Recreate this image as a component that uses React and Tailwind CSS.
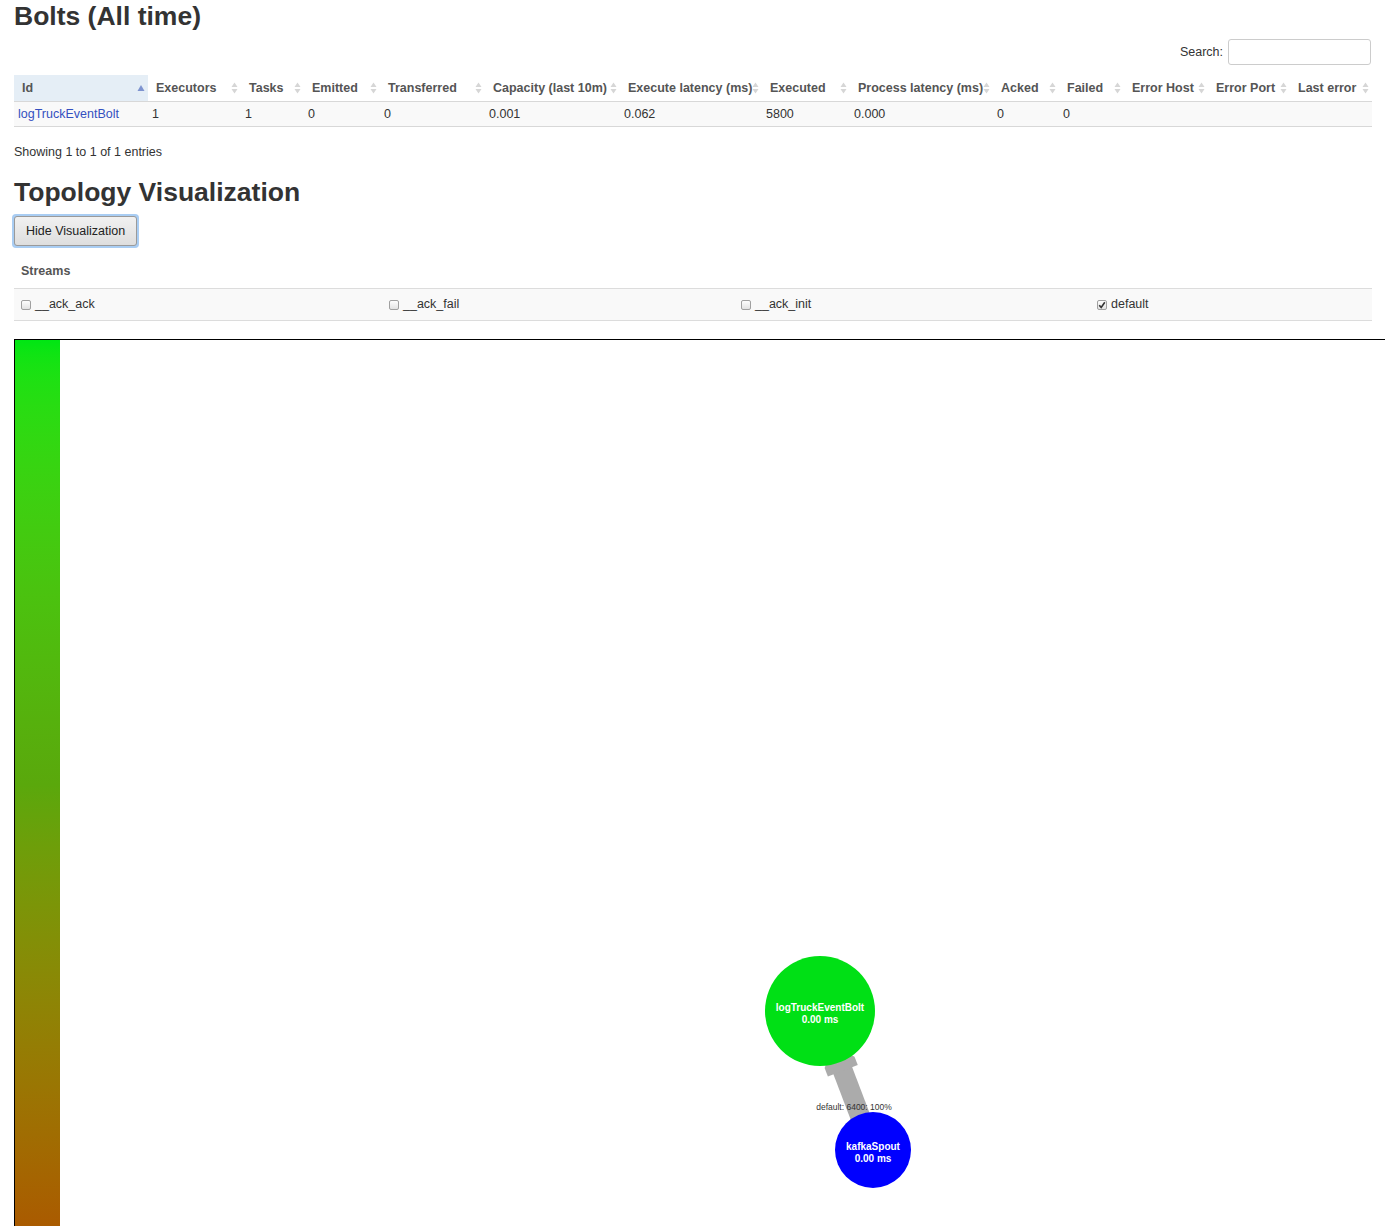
const COLS = [
  { label: "Id", w: 134, sort: "asc" },
  { label: "Executors", w: 93 },
  { label: "Tasks", w: 63 },
  { label: "Emitted", w: 76 },
  { label: "Transferred", w: 105 },
  { label: "Capacity (last 10m)", w: 135 },
  { label: "Execute latency (ms)", w: 142 },
  { label: "Executed", w: 88 },
  { label: "Process latency (ms)", w: 143 },
  { label: "Acked", w: 66 },
  { label: "Failed", w: 65 },
  { label: "Error Host", w: 84 },
  { label: "Error Port", w: 82 },
  { label: "Last error", w: 82 },
];

const ROW = ["logTruckEventBolt", "1", "1", "0", "0", "0.001", "0.062", "5800", "0.000", "0", "0", "", "", ""];

const STREAMS = [
  { name: "__ack_ack", w: 368 },
  { name: "__ack_fail", w: 352 },
  { name: "__ack_init", w: 356 },
  { name: "default", w: 282, checked: true },
];

function SortIcon({ dir }) {
  if (dir === "asc") {
    return (
      <svg width="8" height="8" viewBox="0 0 8 8">
        <path d="M4 1 L7.5 7 L0.5 7 Z" fill="#7e93cf" />
      </svg>
    );
  }
  return (
    <svg width="7" height="12" viewBox="0 0 7 12">
      <path d="M3.5 0.5 L6.5 5 L0.5 5 Z" fill="#d6d6d6" />
      <path d="M3.5 11.5 L6.5 7 L0.5 7 Z" fill="#d6d6d6" />
    </svg>
  );
}

function Check({ checked }) {
  return (
    <span className="inline-flex w-[10px] h-[10px] items-center justify-center rounded-[2px] border border-[#a0a0a0] bg-gradient-to-b from-[#fdfdfd] to-[#e2e2e2]">
      {checked && (
        <svg width="8" height="8" viewBox="0 0 8 8">
          <path d="M1.2 4.2 L3.2 6.4 L6.8 1.2" stroke="#333" strokeWidth="1.6" fill="none" />
        </svg>
      )}
    </span>
  );
}

function Graph() {
  // node centres inside the canvas (canvas origin = page x 60, y 340)
  const g = { x: 760, y: 671, r: 55 };
  const b = { x: 813, y: 810, r: 38 };
  const dx = b.x - g.x, dy = b.y - g.y;
  const len = Math.hypot(dx, dy);
  const ux = dx / len, uy = dy / len;
  const px = -uy, py = ux;
  const at = (d, o) => `${g.x + ux * d + px * o},${g.y + uy * d + py * o}`;
  const shaft = [at(62, -10), at(62, 10), at(len - 20, 10), at(len - 20, -10)].join(" ");
  const head = [at(48, -10), at(55, -16), at(64, -16), at(64, 16), at(55, 16), at(48, 10)].join(" ");
  return (
    <svg width="1400" height="886" className="block">
      <polygon points={shaft} fill="#ababab" />
      <polygon points={head} fill="#ababab" />
      <text x="794" y="770" fontSize="8.5" fill="#333" textAnchor="middle" fontFamily="Liberation Sans, Arial, sans-serif">
        default: 6400: 100%
      </text>
      <circle cx={g.x} cy={g.y} r={g.r} fill="#00e015" />
      <circle cx={b.x} cy={b.y} r={b.r} fill="#0000ff" />
      <g fontFamily="Liberation Sans, Arial, sans-serif" fontSize="10" fontWeight="bold" fill="#fff" textAnchor="middle">
        <text x={g.x} y={g.y}>logTruckEventBolt</text>
        <text x={g.x} y={g.y + 12}>0.00 ms</text>
        <text x={b.x} y={b.y}>kafkaSpout</text>
        <text x={b.x} y={b.y + 12}>0.00 ms</text>
      </g>
    </svg>
  );
}

export default function App() {
  return (
    <div className="w-[1385px] h-[1226px] overflow-hidden bg-white text-[#333] font-['Liberation_Sans',Arial,sans-serif]">
      <div className="pl-[14px] pr-[13px]">
        <h2 className="text-[26.5px] leading-[30px] font-bold pt-[1px] text-[#333]">Bolts (All time)</h2>

        <div className="flex justify-end items-center gap-[5px] mt-[8px] pr-[1px] text-[12.5px]">
          <span>Search:</span>
          <div className="w-[143px] h-[26px] border border-[#ccc] rounded-[3px] bg-white" />
        </div>

        <div className="mt-[10px] text-[12.5px]">
          <div className="flex border-b border-[#d8d8d8]">
            {COLS.map((c) => (
              <div
                key={c.label}
                style={{ width: c.w }}
                className={`relative h-[26px] flex items-center pl-[8px] font-bold text-[#555] whitespace-nowrap ${c.sort ? "bg-[#e5eef6]" : ""}`}
              >
                {c.label}
                <span className="absolute right-[3px] top-[7px] flex items-center h-[12px]">
                  <SortIcon dir={c.sort} />
                </span>
              </div>
            ))}
          </div>
          <div className="flex bg-[#f9f9f9] border-b border-[#d8d8d8]">
            {ROW.map((v, i) => (
              <div key={i} style={{ width: COLS[i].w }} className="h-[24px] flex items-center pl-[4px] whitespace-nowrap">
                {i === 0 ? <span className="text-[#3450c0]">{v}</span> : v}
              </div>
            ))}
          </div>
        </div>

        <p className="mt-[17px] text-[12.5px] leading-[16px]">Showing 1 to 1 of 1 entries</p>

        <h2 className="mt-[17px] text-[26.5px] leading-[30px] font-bold text-[#333]">Topology Visualization</h2>

        <button className="mt-[7px] ml-[-2px] h-[34px] px-[2px] rounded-[4px] bg-[#a9cdf3] flex items-center">
          <span className="h-[30px] px-[11px] pt-[1px] flex items-center rounded-[3px] border border-[#9a9a9a] bg-gradient-to-b from-[#f1f1f1] to-[#dedede] text-[12.5px] text-[#222]">
            Hide Visualization
          </span>
        </button>

        <div className="mt-[15px] pl-[7px] text-[12.5px] font-bold text-[#555] leading-[16px]">Streams</div>

        <div className="mt-[9px] flex h-[33px] bg-[#f9f9f9] border-t border-b border-[#dcdcdc] text-[12.5px]">
          {STREAMS.map((s) => (
            <div key={s.name} style={{ width: s.w }} className="flex items-center gap-[4px] pl-[7px]">
              <Check checked={s.checked} />
              <span>{s.name}</span>
            </div>
          ))}
        </div>
      </div>

      <div className="mt-[18px] ml-[14px] flex w-[1420px] h-[890px] border-t-[1.5px] border-l-[1.5px] border-black">
        <div className="w-[45px] shrink-0 bg-gradient-to-b from-[#00e613] via-[#5aa80c] to-[#aa5a00]" />
        <Graph />
      </div>
    </div>
  );
}
